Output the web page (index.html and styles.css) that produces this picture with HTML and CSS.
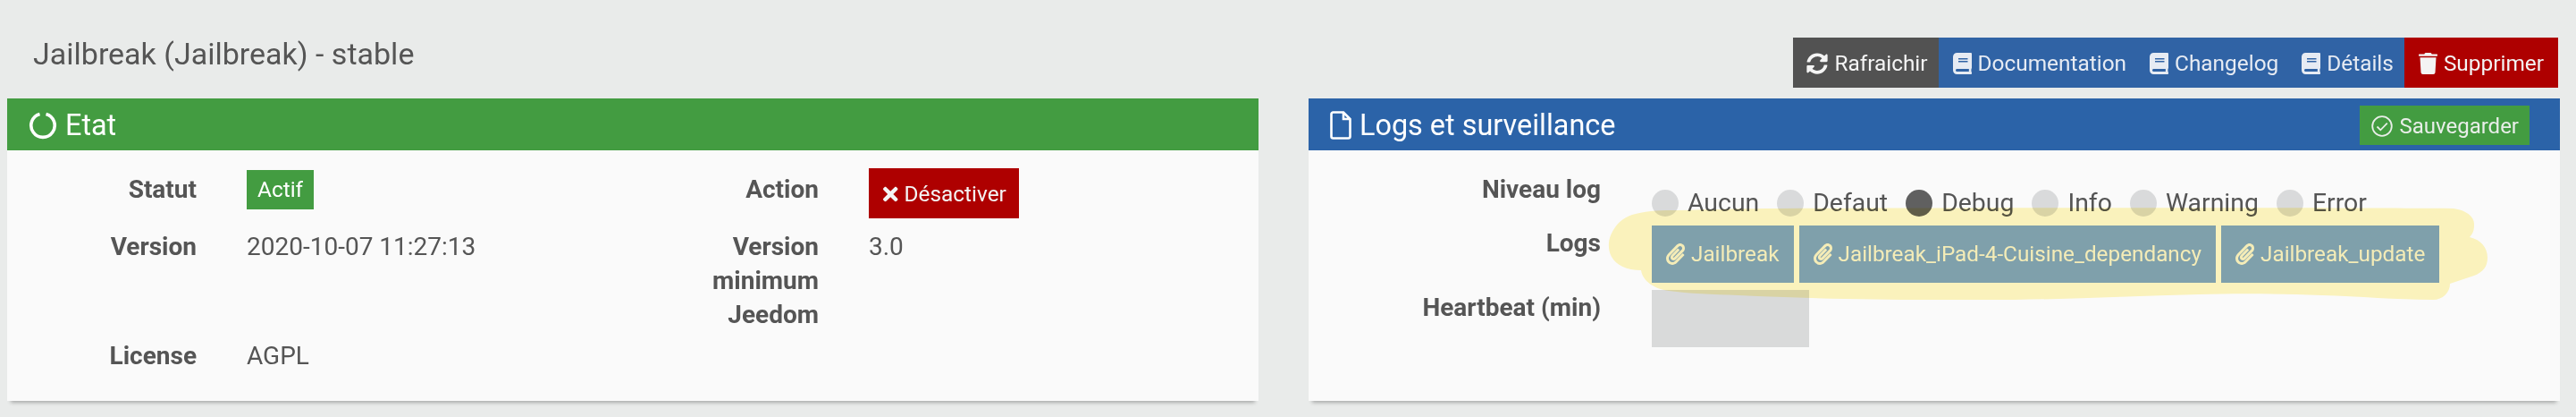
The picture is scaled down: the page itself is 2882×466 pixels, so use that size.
FILE: index.html
```html
<!DOCTYPE html>
<html>
<head>
    <meta charset="UTF-8">
    <title>Jailbreak</title>
    <link rel="stylesheet" href="styles.css">
</head>
<body>
    <div class="page">
        <div class="top">
            <h1>Jailbreak (Jailbreak) - stable</h1>
            <div class="toolbar">
                <a class="btn btn-dark">
                    <svg class="ico ico-sync" viewBox="0 0 512 512"><path d="M370.72 133.28C339.458 104.008 298.888 87.962 255.848 88c-77.458.068-144.328 53.178-162.791 126.85-1.344 5.363-6.122 9.15-11.651 9.15H24.103c-7.498 0-13.194-6.807-11.807-14.176C33.933 94.924 134.813 8 256 8c66.448 0 126.791 26.136 171.315 68.685L463.03 40.97C478.149 25.851 504 36.559 504 57.941V192c0 13.255-10.745 24-24 24H345.941c-21.382 0-32.09-25.851-16.971-40.971l41.75-41.749zM32 296h134.059c21.382 0 32.09 25.851 16.971 40.971l-41.75 41.75c31.262 29.273 71.835 45.319 114.876 45.28 77.418-.07 144.315-53.144 162.787-126.849 1.344-5.363 6.122-9.15 11.651-9.15h57.304c7.498 0 13.194 6.807 11.807 14.176C478.067 417.076 377.187 504 256 504c-66.448 0-126.791-26.136-171.315-68.685L48.97 471.03C33.851 486.149 8 475.441 8 454.059V320c0-13.255 10.745-24 24-24z"/></svg>
                    Rafraichir
                </a>
                <a class="btn btn-blue">
                    <svg class="ico" viewBox="0 0 448 512"><path d="M448 360V24c0-13.3-10.7-24-24-24H96C43 0 0 43 0 96v320c0 53 43 96 96 96h328c13.3 0 24-10.7 24-24v-16c0-7.5-3.5-14.3-8.9-18.7-4.2-15.4-4.2-59.3 0-74.7 5.4-4.3 8.9-11.1 8.9-18.6zM128 134c0-3.3 2.7-6 6-6h212c3.3 0 6 2.7 6 6v20c0 3.3-2.7 6-6 6H134c-3.3 0-6-2.7-6-6v-20zm0 64c0-3.3 2.7-6 6-6h212c3.3 0 6 2.7 6 6v20c0 3.3-2.7 6-6 6H134c-3.3 0-6-2.7-6-6v-20zm253.4 250H96c-17.7 0-32-14.3-32-32 0-17.6 14.4-32 32-32h285.4c-1.9 17.1-1.9 46.9 0 64z"/></svg>
                    Documentation
                </a>
                <a class="btn btn-blue">
                    <svg class="ico" viewBox="0 0 448 512"><path d="M448 360V24c0-13.3-10.7-24-24-24H96C43 0 0 43 0 96v320c0 53 43 96 96 96h328c13.3 0 24-10.7 24-24v-16c0-7.5-3.5-14.3-8.9-18.7-4.2-15.4-4.2-59.3 0-74.7 5.4-4.3 8.9-11.1 8.9-18.6zM128 134c0-3.3 2.7-6 6-6h212c3.3 0 6 2.7 6 6v20c0 3.3-2.7 6-6 6H134c-3.3 0-6-2.7-6-6v-20zm0 64c0-3.3 2.7-6 6-6h212c3.3 0 6 2.7 6 6v20c0 3.3-2.7 6-6 6H134c-3.3 0-6-2.7-6-6v-20zm253.4 250H96c-17.7 0-32-14.3-32-32 0-17.6 14.4-32 32-32h285.4c-1.9 17.1-1.9 46.9 0 64z"/></svg>
                    Changelog
                </a>
                <a class="btn btn-blue btn-last">
                    <svg class="ico" viewBox="0 0 448 512"><path d="M448 360V24c0-13.3-10.7-24-24-24H96C43 0 0 43 0 96v320c0 53 43 96 96 96h328c13.3 0 24-10.7 24-24v-16c0-7.5-3.5-14.3-8.9-18.7-4.2-15.4-4.2-59.3 0-74.7 5.4-4.3 8.9-11.1 8.9-18.6zM128 134c0-3.3 2.7-6 6-6h212c3.3 0 6 2.7 6 6v20c0 3.3-2.7 6-6 6H134c-3.3 0-6-2.7-6-6v-20zm0 64c0-3.3 2.7-6 6-6h212c3.3 0 6 2.7 6 6v20c0 3.3-2.7 6-6 6H134c-3.3 0-6-2.7-6-6v-20zm253.4 250H96c-17.7 0-32-14.3-32-32 0-17.6 14.4-32 32-32h285.4c-1.9 17.1-1.9 46.9 0 64z"/></svg>
                    Détails
                </a>
                <a class="btn btn-red">
                    <svg class="ico" viewBox="0 0 448 512"><path d="M432 32H312l-9.4-18.7A24 24 0 0 0 281.1 0H166.8a23.72 23.72 0 0 0-21.4 13.3L136 32H16A16 16 0 0 0 0 48v16a16 16 0 0 0 16 16h416a16 16 0 0 0 16-16V48a16 16 0 0 0-16-16zM53.2 467a48 48 0 0 0 47.9 45h245.8a48 48 0 0 0 47.9-45L416 112H32z"/></svg>
                    Supprimer
                </a>
            </div>
        </div>

        <div class="panels">
            <section class="panel">
                <header class="panel-head head-green">
                    <h2>
                        <svg class="ico-notch" viewBox="0 0 32 32"><path d="M19.5 3.4A13.2 13.2 0 1 1 12.5 3.4"/></svg>
                        Etat
                    </h2>
                </header>
                <div class="panel-body grid-state">
                    <div class="label">Statut</div>
                    <div><span class="badge">Actif</span></div>
                    <div class="label">Action</div>
                    <div>
                        <a class="btn btn-red btn-action">
                            <svg class="ico-times" viewBox="0 0 352 512"><path d="M242.72 256l100.07-100.07c12.28-12.28 12.28-32.19 0-44.48l-22.24-22.24c-12.28-12.28-32.19-12.28-44.48 0L176 189.28 75.93 89.21c-12.28-12.28-32.19-12.28-44.48 0L9.21 111.45c-12.28 12.28-12.28 32.19 0 44.48L109.28 256 9.21 356.07c-12.28 12.28-12.28 32.19 0 44.48l22.24 22.24c12.28 12.28 32.2 12.28 44.48 0L176 322.72l100.07 100.07c12.28 12.28 32.2 12.28 44.48 0l22.24-22.24c12.28-12.28 12.28-32.19 0-44.48L242.72 256z"/></svg>
                            Désactiver
                        </a>
                    </div>
                    <div class="label">Version</div>
                    <div>2020-10-07 11:27:13</div>
                    <div class="label">Version minimum Jeedom</div>
                    <div>3.0</div>
                    <div class="label">License</div>
                    <div>AGPL</div>
                </div>
            </section>

            <section class="panel">
                <header class="panel-head head-blue">
                    <h2>
                        <svg class="ico-file" viewBox="0 0 24 32"><path d="M1.5 3.5a2 2 0 0 1 2-2h11.5l7.500 7.500v19.500a2 2 0 0 1-2 2h-17a2 2 0 0 1-2-2zM15 1.500v7.500h7.500"/></svg>
                        Logs et surveillance
                    </h2>
                    <a class="btn btn-save">
                        <svg class="ico-check" viewBox="0 0 24 24"><circle cx="12" cy="12" r="10.800"/><path d="M6.500 12.500l3.800 3.800 7.500-7.600"/></svg>
                        Sauvegarder
                    </a>
                </header>
                <div class="panel-body grid-logs">
                    <div class="label">Niveau log</div>
                    <div class="radios">
                        <label class="radio"><span class="dot"></span>Aucun</label>
                        <label class="radio"><span class="dot"></span>Defaut</label>
                        <label class="radio"><span class="dot dot-on"></span>Debug</label>
                        <label class="radio"><span class="dot"></span>Info</label>
                        <label class="radio"><span class="dot"></span>Warning</label>
                        <label class="radio"><span class="dot"></span>Error</label>
                    </div>
                    <div class="label">Logs</div>
                    <div class="log-list">
                        <a class="btn btn-log">
                            <svg class="ico" viewBox="0 0 448 512"><path d="M43.246 466.142c-58.43-60.289-57.341-157.511 1.386-217.581L254.392 34c44.316-45.332 116.351-45.336 160.671 0 43.89 44.894 43.943 117.329 0 162.276L232.214 383.128c-29.855 30.537-78.633 30.111-107.982-.998-28.275-29.97-27.368-77.473 1.452-106.953l143.743-146.835c6.182-6.314 16.312-6.422 22.626-.241l22.861 22.379c6.315 6.182 6.422 16.312.241 22.626L171.427 319.927c-4.932 5.045-5.236 13.428-.648 18.292 4.372 4.634 11.245 4.711 15.688.165l182.849-186.851c19.613-20.062 19.613-52.725-.011-72.798-19.189-19.627-49.957-19.637-69.154 0L90.39 293.295c-34.763 35.56-35.299 93.12-1.191 128.313 34.01 35.093 88.985 35.137 123.058.286l172.06-175.999c6.177-6.319 16.307-6.433 22.626-.256l22.877 22.364c6.319 6.177 6.434 16.307.256 22.626l-172.06 175.998c-59.576 60.938-155.943 60.216-214.77-.485z"/></svg>
                            Jailbreak
                        </a>
                        <a class="btn btn-log">
                            <svg class="ico" viewBox="0 0 448 512"><path d="M43.246 466.142c-58.43-60.289-57.341-157.511 1.386-217.581L254.392 34c44.316-45.332 116.351-45.336 160.671 0 43.89 44.894 43.943 117.329 0 162.276L232.214 383.128c-29.855 30.537-78.633 30.111-107.982-.998-28.275-29.97-27.368-77.473 1.452-106.953l143.743-146.835c6.182-6.314 16.312-6.422 22.626-.241l22.861 22.379c6.315 6.182 6.422 16.312.241 22.626L171.427 319.927c-4.932 5.045-5.236 13.428-.648 18.292 4.372 4.634 11.245 4.711 15.688.165l182.849-186.851c19.613-20.062 19.613-52.725-.011-72.798-19.189-19.627-49.957-19.637-69.154 0L90.39 293.295c-34.763 35.56-35.299 93.12-1.191 128.313 34.01 35.093 88.985 35.137 123.058.286l172.06-175.999c6.177-6.319 16.307-6.433 22.626-.256l22.877 22.364c6.319 6.177 6.434 16.307.256 22.626l-172.06 175.998c-59.576 60.938-155.943 60.216-214.77-.485z"/></svg>
                            Jailbreak_iPad-4-Cuisine_dependancy
                        </a>
                        <a class="btn btn-log">
                            <svg class="ico" viewBox="0 0 448 512"><path d="M43.246 466.142c-58.43-60.289-57.341-157.511 1.386-217.581L254.392 34c44.316-45.332 116.351-45.336 160.671 0 43.89 44.894 43.943 117.329 0 162.276L232.214 383.128c-29.855 30.537-78.633 30.111-107.982-.998-28.275-29.97-27.368-77.473 1.452-106.953l143.743-146.835c6.182-6.314 16.312-6.422 22.626-.241l22.861 22.379c6.315 6.182 6.422 16.312.241 22.626L171.427 319.927c-4.932 5.045-5.236 13.428-.648 18.292 4.372 4.634 11.245 4.711 15.688.165l182.849-186.851c19.613-20.062 19.613-52.725-.011-72.798-19.189-19.627-49.957-19.637-69.154 0L90.39 293.295c-34.763 35.56-35.299 93.12-1.191 128.313 34.01 35.093 88.985 35.137 123.058.286l172.06-175.999c6.177-6.319 16.307-6.433 22.626-.256l22.877 22.364c6.319 6.177 6.434 16.307.256 22.626l-172.06 175.998c-59.576 60.938-155.943 60.216-214.77-.485z"/></svg>
                            Jailbreak_update
                        </a>
                    </div>
                    <div class="label label-hb">Heartbeat (min)</div>
                    <div><div class="input-box"></div></div>
                </div>
            </section>
        </div>

        <!-- marker stroke drawn over the screenshot -->
        <svg class="marker" viewBox="0 0 2882 466">
            <path d="M1991 233C2300 232 2600 232 2745 233C2760 235 2769 243 2768 252C2768 258 2766 262 2763 265C2776 268 2783 277 2783 288C2783 298 2778 304 2768 308L2741 317C2741 327 2733 335 2722 335C2680 335 2640 331 2598 330C2550 328 2500 328 2460 329C2390 331 2320 334 2254 335C2220 335 2190 335 2160 335C2090 335 2010 333 1945 330C1915 329 1890 328 1867 325C1852 323 1838 315 1836 302C1820 302 1808 296 1803 287C1799 280 1799 270 1802 263C1807 251 1816 242 1830 239C1845 235 1860 235 1876 235C1915 234 1950 233 1991 233Z"/>
        </svg>
    </div>
</body>
</html>
```
FILE: styles.css
```css
html, body {
    margin: 0;
    height: 466px;
    overflow: hidden;
}
body {
    font-family: Roboto, sans-serif;
    font-size: 28px;
    line-height: 38px;
    background-color: #e9ebea;
    color: #555;
}
.page {
    position: relative;
    height: 466px;
    padding: 0 18px 0 8px;
    box-sizing: border-box;
}
.top {
    display: flex;
    justify-content: space-between;
    height: 110px;
    padding-left: 29px;
    padding-right: 2px;
}
h1 {
    margin: 40px 0 0;
    font-size: 34px;
    line-height: 40px;
    font-weight: 400;
}
.toolbar {
    display: flex;
    margin-top: 42px;
    height: 56px;
}
.btn {
    display: inline-flex;
    align-items: center;
    gap: 7px;
    box-sizing: border-box;
    padding: 2px 16px 0;
    font-size: 24.4px;
    line-height: 32px;
    white-space: nowrap;
    color: #f4f4f4;
    fill: currentColor;
}
.ico {
    width: 21px;
    height: 24px;
    flex: none;
}
.ico-sync { width: 24px; }
.btn-dark { background-color: #525252; padding-left: 15px; padding-right: 12px; }
.btn-blue { background-color: #3063a5; color: #e6ebf3; padding-right: 10px; }
.btn-last { padding-right: 12px; }
.btn-red { background-color: #ae0000; }

.panels {
    display: flex;
    gap: 56px;
}
.panel {
    flex: 1;
    background-color: #fafafa;
    box-shadow: 0 6px 4px -4px rgba(0, 0, 0, 0.28);
}
.panel-head {
    display: flex;
    justify-content: space-between;
    align-items: center;
    box-sizing: border-box;
    height: 58px;
    padding: 2px 34px 0 24px;
}
.head-green { background-color: #439c41; }
.head-blue { background-color: #2b63a8; }
h2 {
    display: flex;
    align-items: center;
    gap: 9px;
    margin: 0;
    font-size: 32.4px;
    font-weight: 400;
    color: #fff;
}
.ico-notch {
    width: 32px;
    height: 32px;
    fill: none;
    stroke: #fff;
    stroke-width: 3.6;
}
.ico-file {
    width: 24px;
    height: 32px;
    fill: none;
    stroke: #fff;
    stroke-width: 2.6;
}
.btn-save {
    height: 44px;
    background-color: #439c41;
    color: #e9eee9;
    font-size: 24px;
    padding: 2px 12px 0 13px;
}
.ico-check {
    width: 24px;
    height: 24px;
    fill: none;
    stroke: currentColor;
    stroke-width: 1.8;
}

.panel-body {
    display: grid;
    height: 280px;
    box-sizing: border-box;
    align-content: start;
}
.label {
    font-weight: 700;
    text-align: right;
}
.grid-state {
    grid-template-columns: 212px 372px 212px 1fr;
    column-gap: 56px;
    row-gap: 8px;
    padding-top: 20px;
}
.grid-state > .label:nth-child(1),
.grid-state > .label:nth-child(3) {
    margin-top: 5px;
}
.badge {
    display: inline-block;
    margin-top: 2px;
    padding: 0 12px;
    height: 44px;
    line-height: 44px;
    font-size: 24.4px;
    background-color: #439c41;
    color: #fff;
}
.btn-action {
    height: 56px;
    margin-bottom: 5px;
    padding-right: 14px;
    vertical-align: top;
}
.ico-times {
    width: 16.5px;
    height: 24px;
    flex: none;
}

.grid-logs {
    grid-template-columns: 327px 1fr;
    column-gap: 57px;
    row-gap: 8px;
    padding-top: 25px;
}
.radios {
    display: flex;
    gap: 20px;
    margin-top: 15px;
    height: 37px;
    font-size: 28.4px;
}
.radio {
    display: flex;
    align-items: center;
    gap: 10px;
    height: 38px;
}
.dot {
    width: 30px;
    height: 30px;
    border-radius: 50%;
    background-color: #d9dadb;
}
.dot-on { background-color: #606060; }
.log-list {
    display: flex;
    gap: 6px;
    margin-top: -1px;
}
.btn-log {
    height: 64px;
    padding-top: 0;
    background-color: #7fa5e3;
    color: #f4f4f4;
    font-size: 24.3px;
}
.label-hb { margin-top: 1px; }
.input-box {
    width: 176px;
    height: 64px;
    background-color: #d9dada;
}

.marker {
    position: absolute;
    left: 0;
    top: 0;
    width: 2882px;
    height: 466px;
    fill: #fff7c0;
    mix-blend-mode: multiply;
    pointer-events: none;
}
```
